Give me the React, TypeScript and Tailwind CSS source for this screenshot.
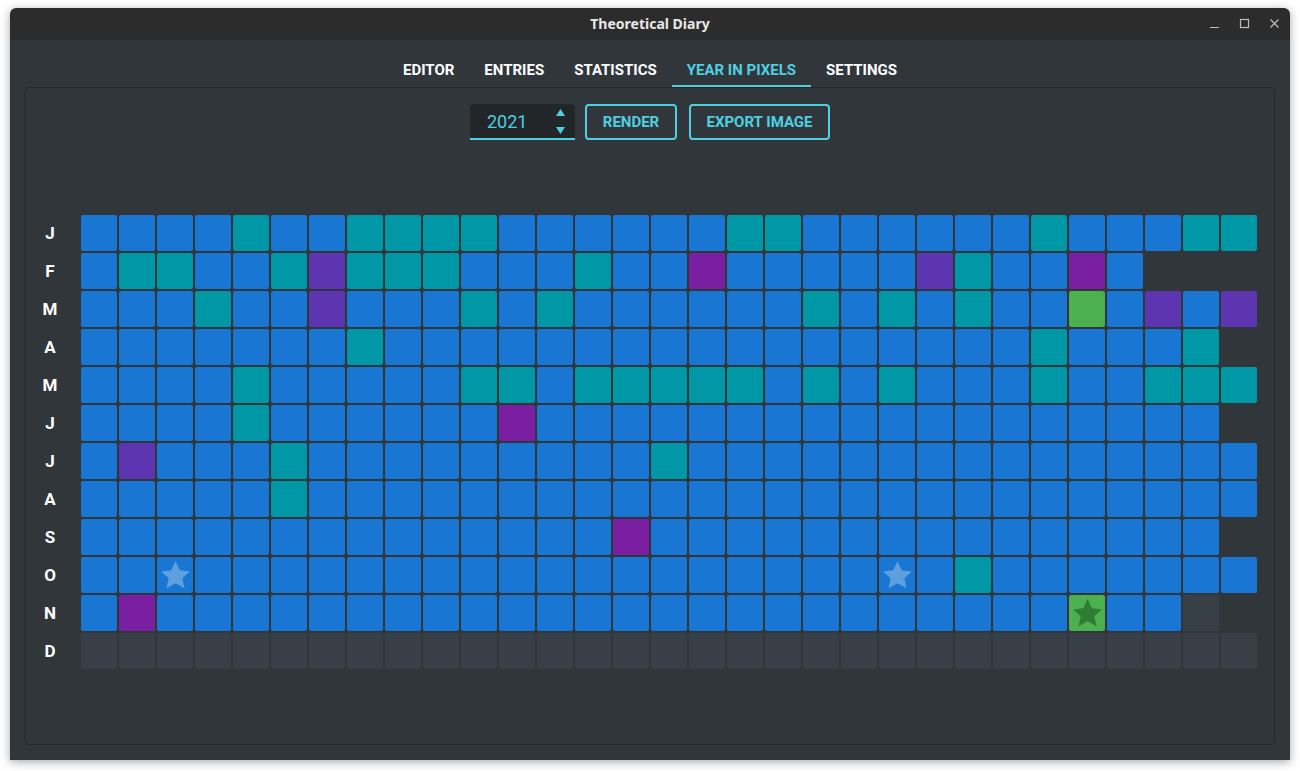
const b = (n: number) => "b".repeat(n);

// one string per month, one char per day
// b blue, t teal, p purple, d deep purple, g green, s blue + star, G green + star, e no entry, . no day
const months: { label: string; days: string }[] = [
  { label: "J", days: "bbbbtbbttttbbbbbbttbbbbbbtbbbtt" },
  { label: "F", days: "bttbbtdtttbbbtbbpbbbbbdtbbpb..." },
  { label: "M", days: "bbbtbbdbbbtbtbbbbbbtbtbtbbgbdbd" },
  { label: "A", days: "bbbbbbbt" + b(17) + "tbbbt." },
  { label: "M", days: "bbbbtbbbbbttbtttttbtbtbbbtbbttt" },
  { label: "J", days: "bbbbt" + b(6) + "p" + b(18) + "." },
  { label: "J", days: "bdbbbt" + b(9) + "t" + b(15) },
  { label: "A", days: "bbbbbt" + b(25) },
  { label: "S", days: b(14) + "p" + b(15) + "." },
  { label: "O", days: "bbs" + b(18) + "sbt" + b(7) },
  { label: "N", days: "bp" + b(24) + "Gbbe." },
  { label: "D", days: "e".repeat(31) },
];

const cellColor: Record<string, string> = {
  b: "bg-[#1976d2]",
  s: "bg-[#1976d2]",
  t: "bg-[#0097a7]",
  p: "bg-[#7b1fa2]",
  d: "bg-[#5e35b1]",
  g: "bg-[#4caf50]",
  G: "bg-[#4caf50]",
  e: "bg-[#383f47]",
  ".": "bg-transparent",
};

const tabs = ["EDITOR", "ENTRIES", "STATISTICS", "YEAR IN PIXELS", "SETTINGS"];

const Star = ({ fill }: { fill: string }) => (
  <svg width="33" height="33" viewBox="0 0 24 24" className="shrink-0">
    <polygon
      points="12,1.5 15.1,8.2 22.4,9 17,14 18.5,21.3 12,17.6 5.5,21.3 7,14 1.6,9 8.9,8.2"
      fill={fill}
    />
  </svg>
);

export default function App() {
  return (
    <div className="w-[1300px] h-[771px] bg-white pt-[8px] pl-[10px] font-['Roboto',sans-serif]">
      <div className="w-[1280px] h-[752px] flex flex-col rounded-t-[6px] overflow-hidden shadow-[0_2px_10px_rgba(0,0,0,0.35)]">
        {/* Title bar */}
        <div className="relative h-[32px] bg-[#2c2c2c] flex items-center justify-center">
          <span className="text-[14px] font-bold text-[#e8e8e8] font-['Noto_Sans',sans-serif] -mt-[2px]">
            Theoretical Diary
          </span>
          <div className="absolute right-[7px] top-0 h-full flex items-center gap-[14px] text-[#bdbdbd]">
            <svg width="16" height="16" viewBox="0 0 16 16">
              <line x1="3" y1="11.5" x2="12" y2="11.5" stroke="currentColor" strokeWidth="1.2" />
            </svg>
            <svg width="16" height="16" viewBox="0 0 16 16">
              <rect x="3.5" y="3.5" width="8" height="8" fill="none" stroke="currentColor" strokeWidth="1.2" />
            </svg>
            <svg width="16" height="16" viewBox="0 0 16 16">
              <path d="M3.5 3.5 L11.5 11.5 M11.5 3.5 L3.5 11.5" stroke="currentColor" strokeWidth="1.2" />
            </svg>
          </div>
        </div>

        {/* Content */}
        <div className="flex-1 bg-[#31363b] flex flex-col px-[15px] pb-[15px]">
          <div className="flex justify-center pt-[12px]">
            {tabs.map((t) => (
              <div
                key={t}
                className={`h-[35px] px-[15px] pt-[4px] flex items-center text-[15px] font-bold border-b-2 ${
                  t === "YEAR IN PIXELS"
                    ? "text-[#4dd0e1] border-[#4dd0e1]"
                    : "text-white border-transparent"
                }`}
              >
                {t}
              </div>
            ))}
          </div>

          <div className="flex-1 border border-[#24282b] rounded-[4px] flex flex-col items-center">
            {/* Controls */}
            <div className="mt-[16px] flex items-center">
              <div className="w-[105px] h-[36px] bg-[#232629] rounded-t-[4px] border-b-2 border-[#4dd0e1] flex items-center pl-[17px] pr-[10px]">
                <span className="flex-1 text-[18px] text-[#4dd0e1]">2021</span>
                <div className="flex flex-col justify-between h-[26px] pt-[1px]">
                  <svg width="9" height="7" viewBox="0 0 9 7">
                    <polygon points="4.5,0 9,7 0,7" fill="#4dd0e1" />
                  </svg>
                  <svg width="9" height="7" viewBox="0 0 9 7">
                    <polygon points="0,0 9,0 4.5,7" fill="#4dd0e1" />
                  </svg>
                </div>
              </div>
              <button className="ml-[10px] w-[92px] h-[36px] border-2 border-[#4dd0e1] rounded-[4px] text-[15px] font-bold text-[#4dd0e1]">
                RENDER
              </button>
              <button className="ml-[12px] w-[141px] h-[36px] border-2 border-[#4dd0e1] rounded-[4px] text-[15px] font-bold text-[#4dd0e1]">
                EXPORT IMAGE
              </button>
            </div>

            {/* Year in pixels grid */}
            <div className="self-start mt-[75px] flex flex-col gap-[2px]">
              {months.map((m, mi) => (
                <div key={mi} className="flex items-center">
                  <div className="w-[48px] mr-[7px] pt-[2px] text-center text-[17px] font-bold text-white">
                    {m.label}
                  </div>
                  <div className="flex gap-[2px]">
                    {m.days.split("").map((c, di) => (
                      <div
                        key={di}
                        className={`w-[36px] h-[36px] rounded-[2px] flex items-center justify-center overflow-hidden ${cellColor[c]}`}
                      >
                        {c === "s" && <Star fill="rgba(255,255,255,0.3)" />}
                        {c === "G" && <Star fill="#2e7d32" />}
                      </div>
                    ))}
                  </div>
                </div>
              ))}
            </div>
          </div>
        </div>
      </div>
    </div>
  );
}
